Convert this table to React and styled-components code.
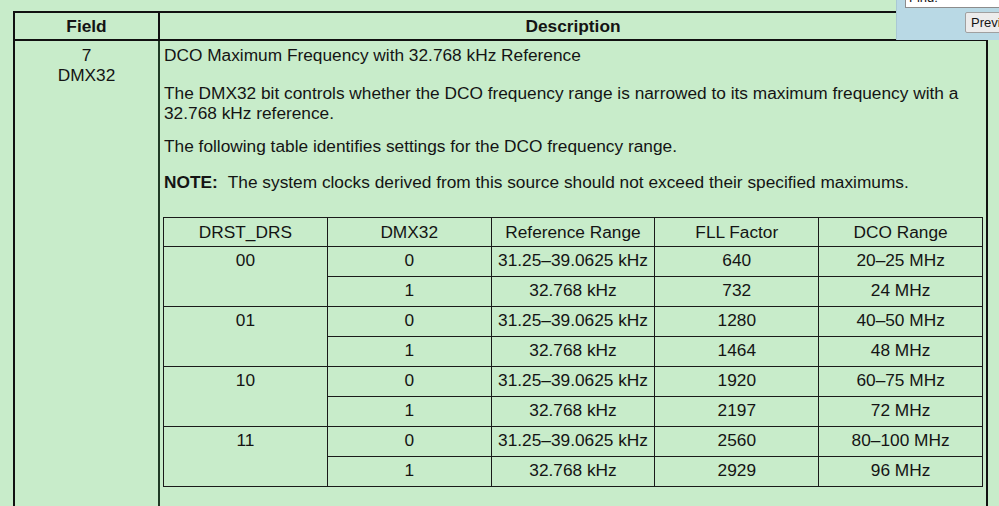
import React from "react";
import styled, { createGlobalStyle } from "styled-components";

const rows = [
  { drs: "00", items: [["0", "31.25–39.0625 kHz", "640", "20–25 MHz"], ["1", "32.768 kHz", "732", "24 MHz"]] },
  { drs: "01", items: [["0", "31.25–39.0625 kHz", "1280", "40–50 MHz"], ["1", "32.768 kHz", "1464", "48 MHz"]] },
  { drs: "10", items: [["0", "31.25–39.0625 kHz", "1920", "60–75 MHz"], ["1", "32.768 kHz", "2197", "72 MHz"]] },
  { drs: "11", items: [["0", "31.25–39.0625 kHz", "2560", "80–100 MHz"], ["1", "32.768 kHz", "2929", "96 MHz"]] },
];

export default function App() {
  return (
    <>
      <GlobalStyle />
      <StyledPage>
        <StyledOuterTable>
          <colgroup>
            <col style={{ width: 145 }} />
            <col />
          </colgroup>
          <thead>
            <tr>
              <StyledHeadCell>Field</StyledHeadCell>
              <StyledHeadCell>Description</StyledHeadCell>
            </tr>
          </thead>
          <tbody>
            <tr>
              <StyledFieldCell>
                7
                <br />
                DMX32
              </StyledFieldCell>
              <StyledDescCell>
                <StyledTitle>DCO Maximum Frequency with 32.768 kHz Reference</StyledTitle>
                <StyledParagraph $gap={13}>
                  The DMX32 bit controls whether the DCO frequency range is narrowed to its maximum frequency with a
                  32.768 kHz reference.
                </StyledParagraph>
                <StyledParagraph $gap={16}>
                  The following table identifies settings for the DCO frequency range.
                </StyledParagraph>
                <StyledParagraph $gap={25}>
                  <StyledNote>NOTE:</StyledNote>
                  The system clocks derived from this source should not exceed their specified maximums.
                </StyledParagraph>

                <StyledInnerTable>
                  <thead>
                    <tr>
                      <StyledInnerHead>DRST_DRS</StyledInnerHead>
                      <StyledInnerHead>DMX32</StyledInnerHead>
                      <StyledInnerHead>Reference Range</StyledInnerHead>
                      <StyledInnerHead>FLL Factor</StyledInnerHead>
                      <StyledInnerHead>DCO Range</StyledInnerHead>
                    </tr>
                  </thead>
                  <tbody>
                    {rows.map((row) =>
                      row.items.map((item, i) => (
                        <tr key={row.drs + i}>
                          {i === 0 && <StyledInnerCell rowSpan={2}>{row.drs}</StyledInnerCell>}
                          {item.map((value, j) => (
                            <StyledInnerCell key={j}>{value}</StyledInnerCell>
                          ))}
                        </tr>
                      ))
                    )}
                  </tbody>
                </StyledInnerTable>
              </StyledDescCell>
            </tr>
          </tbody>
        </StyledOuterTable>

        <StyledFindBar>
          <StyledFindInput>Find:</StyledFindInput>
          <StyledFindButton>Previous</StyledFindButton>
        </StyledFindBar>
      </StyledPage>
    </>
  );
}

const GlobalStyle = createGlobalStyle`
  html, body {
    margin: 0;
    background: #c8ecca;
    overflow: hidden;
  }
  body {
    font-family: "Liberation Sans", Arial, sans-serif;
    color: #141414;
  }
`;

const StyledPage = styled.div`
  position: relative;
  width: 999px;
  height: 506px;
  overflow: hidden;
  padding: 11px 0 0 13px;
  box-sizing: border-box;
`;

const StyledOuterTable = styled.table`
  border-collapse: collapse;
  width: 975px;
  table-layout: fixed;
`;

const StyledHeadCell = styled.th`
  border: 2px solid #111;
  height: 26px;
  padding: 0;
  font-size: 17.3px;
  font-weight: bold;
  text-align: center;
`;

const StyledFieldCell = styled.td`
  border-left: 2px solid #111;
  border-right: 2px solid #1f3a24;
  vertical-align: top;
  text-align: center;
  font-size: 17.3px;
  line-height: 20px;
  padding: 4px 0 0;
`;

const StyledDescCell = styled.td`
  border-right: 2px solid #111;
  vertical-align: top;
  font-size: 17.3px;
  line-height: 20px;
  padding: 4px 1px 40px 3px;
`;

const StyledTitle = styled.div`
  margin: 0 0 18px 1px;
`;

const StyledParagraph = styled.p`
  margin: 0 0 ${(p) => p.$gap}px 1px;
`;

const StyledNote = styled.b`
  margin-right: 10px;
`;

const StyledInnerTable = styled.table`
  border-collapse: collapse;
  width: 820px;
  table-layout: fixed;
  font-size: 17.3px;
`;

const StyledInnerHead = styled.th`
  border: 1px solid #1a1a1a;
  height: 28px;
  padding: 0;
  font-weight: normal;
  text-align: center;
`;

const StyledInnerCell = styled.td`
  border: 1px solid #1a1a1a;
  height: 30px;
  padding: 3px 0 0;
  box-sizing: border-box;
  vertical-align: top;
  text-align: center;
  line-height: 20px;
`;

const StyledFindBar = styled.div`
  position: absolute;
  top: 0;
  left: 896px;
  width: 103px;
  height: 40px;
  background: #b9d9e5;
  border-left: 1px solid #a9c8d4;
  box-sizing: border-box;
`;

const StyledFindInput = styled.div`
  position: absolute;
  top: -12px;
  left: 8px;
  width: 120px;
  height: 20px;
  background: #fff;
  border: 1px solid #8c8c8c;
  box-sizing: border-box;
  font-family: "Liberation Sans", Arial, sans-serif;
  font-size: 13px;
  line-height: 18px;
  padding-left: 3px;
`;

const StyledFindButton = styled.div`
  position: absolute;
  top: 12px;
  left: 68px;
  height: 21px;
  padding: 0 5px;
  background: #ececec;
  border: 1px solid #a0a0a0;
  border-radius: 2px;
  box-sizing: border-box;
  font-family: "Liberation Sans", Arial, sans-serif;
  font-size: 13px;
  line-height: 19px;
  white-space: nowrap;
`;
